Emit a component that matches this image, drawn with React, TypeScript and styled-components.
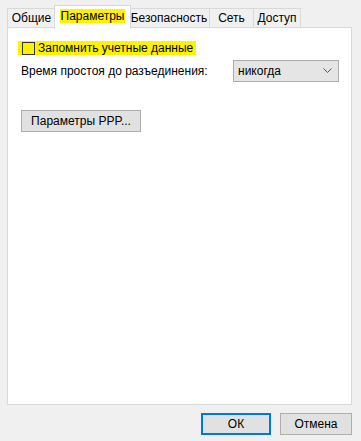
import styled, { createGlobalStyle } from "styled-components";

const GlobalStyle = createGlobalStyle`
  html, body {
    margin: 0;
    padding: 0;
    background: #f0f0f0;
  }
  body {
    font-family: "Liberation Sans", Arial, sans-serif;
    font-size: 12px;
    color: #000;
  }
`;

const Window = styled.div`
  width: 361px;
  height: 441px;
  box-sizing: border-box;
  padding: 5px 9px 0 7px;
  background: #f0f0f0;
  display: flex;
  flex-direction: column;
`;

const TabBar = styled.div`
  display: flex;
  align-items: flex-end;
  height: 23px;
`;

const Tab = styled.div<{ $w: number; $active?: boolean }>`
  position: relative;
  box-sizing: border-box;
  width: ${(p) => p.$w}px;
  height: ${(p) => (p.$active ? 24 : 20)}px;
  margin: ${(p) => (p.$active ? "0 -2px -1px" : "0")};
  z-index: ${(p) => (p.$active ? 2 : 0)};
  display: flex;
  align-items: center;
  justify-content: center;
  padding-bottom: ${(p) => (p.$active ? 3 : 0)}px;
  background: ${(p) => (p.$active ? "#fff" : "#f0f0f0")};
  border: 1px solid #d9d9d9;
  border-bottom: ${(p) => (p.$active ? "none" : "1px solid #d9d9d9")};
  margin-left: ${(p) => (p.$active ? -2 : -1)}px;
  &:first-child {
    margin-left: 0;
  }
  white-space: nowrap;
`;

const Mark = styled.span`
  background: #fff200;
  padding: 0 1px;
  line-height: 14px;
`;

const Panel = styled.div`
  position: relative;
  z-index: 1;
  margin-top: -1px;
  height: 378px;
  box-sizing: border-box;
  background: #fff;
  border: 1px solid #d9d9d9;
  padding: 13px 12px 0 10px;
  display: flex;
  flex-direction: column;
`;

const CheckRow = styled.label`
  align-self: flex-start;
  display: flex;
  align-items: center;
  gap: 3px;
  height: 14px;
  padding: 0 3px 0 4px;
  background: #fff200;
  white-space: nowrap;
`;

const Box = styled.span`
  width: 13px;
  height: 13px;
  box-sizing: border-box;
  border: 1px solid #333;
`;

const FieldRow = styled.div`
  display: flex;
  align-items: center;
  justify-content: space-between;
  margin-top: 5px;
  padding-left: 3px;
`;

const Select = styled.div`
  width: 106px;
  height: 22px;
  box-sizing: border-box;
  background: #e5e5e5;
  border: 1px solid #acacac;
  display: flex;
  align-items: center;
  justify-content: space-between;
  padding: 0 6px 0 4px;
`;

const Button = styled.div<{ $w: number; $default?: boolean }>`
  width: ${(p) => p.$w}px;
  height: 22px;
  box-sizing: border-box;
  background: #e1e1e1;
  border: ${(p) => (p.$default ? "2px solid #0078d7" : "1px solid #adadad")};
  display: flex;
  align-items: center;
  justify-content: center;
`;

const PppButton = styled(Button)`
  margin-top: 28px;
  margin-left: 3px;
`;

const Footer = styled.div`
  display: flex;
  justify-content: flex-end;
  gap: 9px;
  margin-top: 8px;
`;

const Chevron = () => (
  <svg width="9" height="6" viewBox="0 0 9 6">
    <path d="M0.5 0.5 L4.5 4.5 L8.5 0.5" fill="none" stroke="#555" strokeWidth="1" />
  </svg>
);

export default function App() {
  return (
    <>
      <GlobalStyle />
      <Window>
        <TabBar>
          <Tab $w={49}>Общие</Tab>
          <Tab $w={77} $active>
            <Mark>Параметры</Mark>
          </Tab>
          <Tab $w={82}>Безопасность</Tab>
          <Tab $w={45}>Сеть</Tab>
          <Tab $w={48}>Доступ</Tab>
        </TabBar>
        <Panel>
          <CheckRow>
            <Box />
            Запомнить учетные данные
          </CheckRow>
          <FieldRow>
            <span>Время простоя до разъединения:</span>
            <Select>
              <span>никогда</span>
              <Chevron />
            </Select>
          </FieldRow>
          <PppButton $w={120}>Параметры PPP...</PppButton>
        </Panel>
        <Footer>
          <Button $w={70} $default>
            ОК
          </Button>
          <Button $w={72}>Отмена</Button>
        </Footer>
      </Window>
    </>
  );
}
